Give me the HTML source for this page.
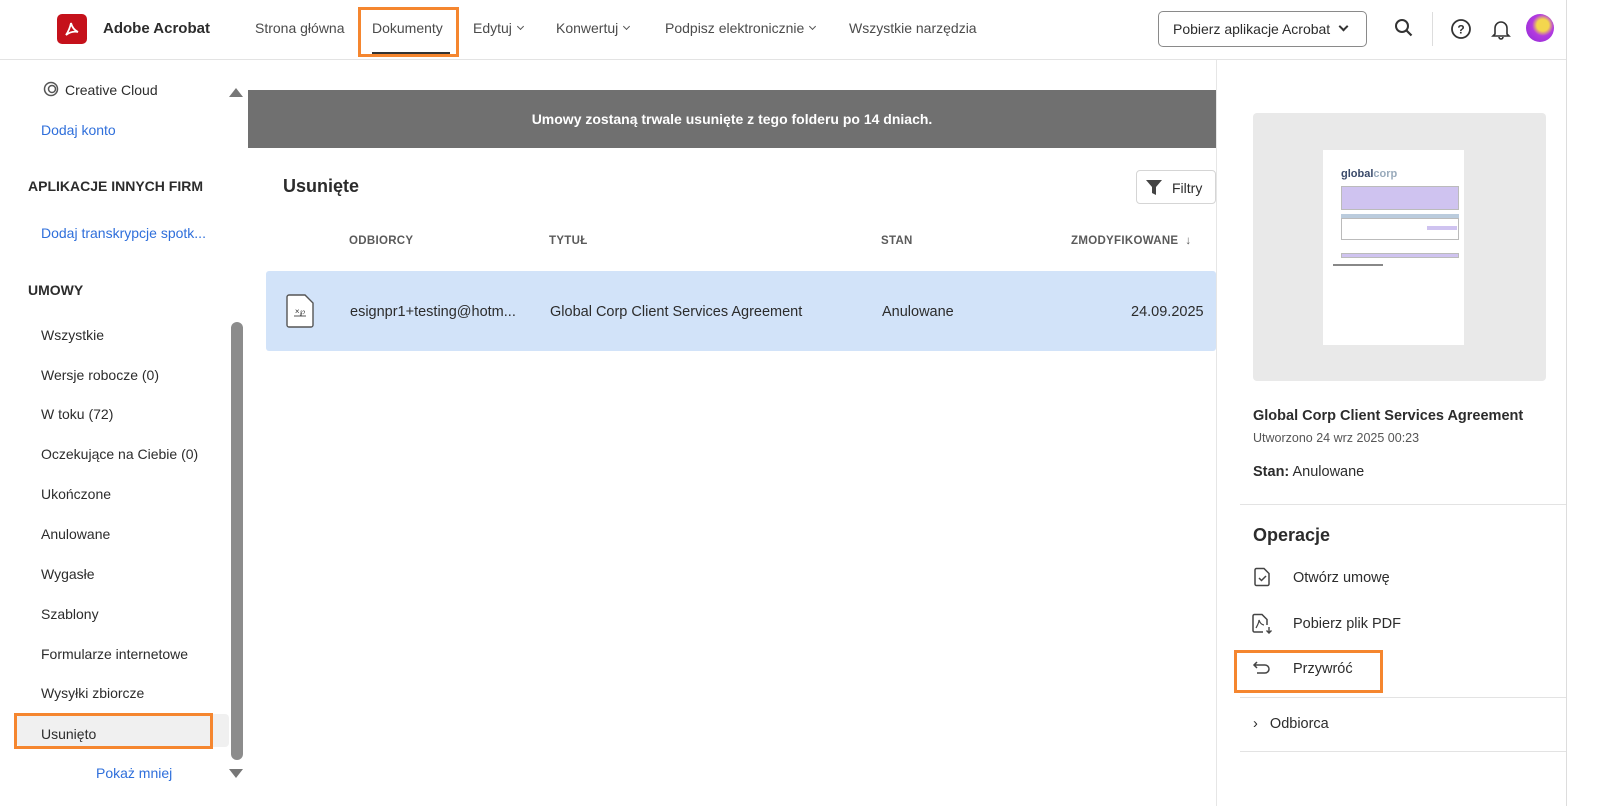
<!DOCTYPE html>
<html><head><meta charset="utf-8"><style>
*{margin:0;padding:0;box-sizing:border-box}
body{width:1599px;height:806px;position:relative;overflow:hidden;background:#fff;font-family:"Liberation Sans",sans-serif;color:#2c2c2c;font-size:14px}
.a{position:absolute;white-space:nowrap}
.nav{top:20px;font-size:14px;color:#4b4b4b}
.side{left:41px;font-size:14px;color:#2c2c2c}
.blue{color:#2f6fdb}
.ob{position:absolute;border:3px solid #f5862f}
.hd{top:235px;font-size:11.5px;font-weight:bold;color:#5a5a5a;letter-spacing:.3px}
.cv{display:inline-block;width:5px;height:5px;border-right:1.3px solid #555;border-bottom:1.3px solid #555;transform:rotate(45deg);margin:0 0 4px 6px}
</style></head><body>
<!-- header -->
<div class="a" style="left:57px;top:14px;width:30px;height:30px;background:#c5111b;border-radius:5px"></div>
<svg class="a" style="left:62px;top:19px" width="20" height="20" viewBox="0 0 20 20"><path d="M4 16c2-3 4-7 5-12 1 4 3 7 7 9-4-1-8 0-12 3z" fill="none" stroke="#fff" stroke-width="1.8"/></svg>
<div class="a" style="left:103px;top:20px;font-size:15px;font-weight:bold;color:#2c2c2c">Adobe Acrobat</div>
<div class="a nav" style="left:255px">Strona główna</div>
<div class="a nav" style="left:372px">Dokumenty</div>
<div class="a" style="left:372px;top:52px;width:78px;height:2px;background:#333"></div>
<div class="a nav" style="left:473px">Edytuj<span class="cv"></span></div>
<div class="a nav" style="left:556px">Konwertuj<span class="cv"></span></div>
<div class="a nav" style="left:665px">Podpisz elektronicznie<span class="cv"></span></div>
<div class="a nav" style="left:849px">Wszystkie narzędzia</div>
<div class="ob" style="left:358px;top:7px;width:101px;height:50px"></div>
<div class="a" style="left:1158px;top:11px;width:209px;height:36px;border:1px solid #8a8a8a;border-radius:5px;font-size:14px;padding:9px 0 0 14px;color:#2c2c2c">Pobierz aplikacje Acrobat<span class="cv" style="width:7px;height:7px;border-width:2px;border-color:#333;margin-left:10px"></span></div>
<svg class="a" style="left:1394px;top:18px" width="20" height="20" viewBox="0 0 20 20"><circle cx="8" cy="8" r="6" fill="none" stroke="#333" stroke-width="2"/><path d="M12.5 12.5l5 5" stroke="#333" stroke-width="2.2"/></svg>
<div class="a" style="left:1432px;top:12px;width:1px;height:34px;background:#ddd"></div>
<svg class="a" style="left:1450px;top:18px" width="22" height="22" viewBox="0 0 22 22"><circle cx="11" cy="11" r="9" fill="none" stroke="#333" stroke-width="1.8"/><text x="11" y="15.5" font-size="12" text-anchor="middle" fill="#333" font-family="Liberation Sans" font-weight="bold">?</text></svg>
<svg class="a" style="left:1491px;top:18px" width="20" height="22" viewBox="0 0 20 22"><path d="M4 16V10a6 6 0 0112 0v6l2 2H2z M8 19a2 2 0 004 0" fill="none" stroke="#333" stroke-width="1.6"/></svg>
<div class="a" style="left:1526px;top:14px;width:28px;height:28px;border-radius:50%;background:radial-gradient(circle at 60% 40%,#f3d64e 0 25%,#b33be0 45%,#8f2ad6)"></div>
<div class="a" style="left:0;top:59px;width:1567px;height:1px;background:#e3e3e3"></div>
<div class="a" style="left:1566px;top:0;width:1px;height:806px;background:#ddd"></div>

<!-- sidebar -->
<svg class="a" style="left:41px;top:81px" width="20" height="16" viewBox="0 0 20 16"><circle cx="10" cy="8" r="6.5" fill="none" stroke="#555" stroke-width="1.5"/><circle cx="11" cy="8" r="3.5" fill="none" stroke="#555" stroke-width="1.5"/></svg>
<div class="a side" style="left:65px;top:82px">Creative Cloud</div>
<div class="a side blue" style="top:122px">Dodaj konto</div>
<div class="a" style="left:28px;top:178px;font-size:14px;font-weight:bold;color:#2c2c2c">APLIKACJE INNYCH FIRM</div>
<div class="a side blue" style="top:225px">Dodaj transkrypcje spotk...</div>
<div class="a" style="left:28px;top:282px;font-size:14px;font-weight:bold;color:#2c2c2c">UMOWY</div>
<div class="a side" style="top:327px">Wszystkie</div>
<div class="a side" style="top:367px">Wersje robocze (0)</div>
<div class="a side" style="top:406px">W toku (72)</div>
<div class="a side" style="top:446px">Oczekujące na Ciebie (0)</div>
<div class="a side" style="top:486px">Ukończone</div>
<div class="a side" style="top:526px">Anulowane</div>
<div class="a side" style="top:566px">Wygasłe</div>
<div class="a side" style="top:606px">Szablony</div>
<div class="a side" style="top:646px">Formularze internetowe</div>
<div class="a side" style="top:685px">Wysyłki zbiorcze</div>
<div class="a" style="left:17px;top:714px;width:212px;height:33px;background:#f0f0f0;border-radius:4px"></div>
<div class="a side" style="top:726px">Usunięto</div>
<div class="ob" style="left:14px;top:713px;width:199px;height:36px"></div>
<div class="a side blue" style="left:96px;top:765px">Pokaż mniej</div>
<div class="a" style="left:229px;top:88px;width:0;height:0;border-left:7px solid transparent;border-right:7px solid transparent;border-bottom:9px solid #777"></div>
<div class="a" style="left:231px;top:322px;width:12px;height:438px;background:#8c8c8c;border-radius:6px"></div>
<div class="a" style="left:229px;top:769px;width:0;height:0;border-left:7px solid transparent;border-right:7px solid transparent;border-top:9px solid #777"></div>

<!-- main -->
<div class="a" style="left:248px;top:90px;width:968px;height:58px;background:#707070;color:#fff;font-weight:bold;font-size:14px;text-align:center;line-height:58px">Umowy zostaną trwale usunięte z tego folderu po 14 dniach.</div>
<div class="a" style="left:1216px;top:60px;width:1px;height:746px;background:#e6e6e6"></div>
<div class="a" style="left:283px;top:176px;font-size:18px;font-weight:bold;color:#2c2c2c">Usunięte</div>
<div class="a" style="left:1136px;top:170px;width:80px;height:34px;border:1px solid #d5d5d5;border-radius:4px;font-size:14px;padding:9px 0 0 35px">Filtry</div>
<svg class="a" style="left:1145px;top:179px" width="18" height="17" viewBox="0 0 18 17"><path d="M1 1h16l-6 7v8l-4-2V8z" fill="#444"/></svg>
<div class="a hd" style="left:349px">ODBIORCY</div>
<div class="a hd" style="left:549px">TYTUŁ</div>
<div class="a hd" style="left:881px">STAN</div>
<div class="a hd" style="left:1071px">ZMODYFIKOWANE&nbsp; ↓</div>
<div class="a" style="left:266px;top:271px;width:950px;height:80px;background:#d2e3f9;border-radius:3px"></div>
<svg class="a" style="left:285px;top:294px" width="30" height="34" viewBox="0 0 30 34"><path d="M2 3a2 2 0 012-2h16l8 8v22a2 2 0 01-2 2H4a2 2 0 01-2-2z" fill="#fff" stroke="#555" stroke-width="1.4"/><text x="15" y="20" font-size="8" text-anchor="middle" fill="#333" font-family="Liberation Sans">×℘</text><path d="M9 22h12" stroke="#555"/></svg>
<div class="a" style="left:350px;top:304px;font-size:14.5px">esignpr1+testing@hotm...</div>
<div class="a" style="left:550px;top:304px;font-size:14.5px">Global Corp Client Services Agreement</div>
<div class="a" style="left:882px;top:304px;font-size:14.5px">Anulowane</div>
<div class="a" style="left:1131px;top:304px;font-size:14.5px">24.09.2025</div>

<!-- right panel -->
<div class="a" style="left:1253px;top:113px;width:293px;height:268px;background:#e9e9e9;border-radius:4px"></div>
<div class="a" style="left:1323px;top:150px;width:141px;height:195px;background:#fff">
 <div class="a" style="left:18px;top:18px;font-size:11px;font-weight:bold;color:#3a4a6a">global<span style="color:#9ab">corp</span></div>
 <div class="a" style="left:18px;top:36px;width:118px;height:24px;background:#cfc3f0;border:1px solid #bbb"></div>
 <div class="a" style="left:18px;top:64px;width:118px;height:4px;background:#bcd"></div>
 <div class="a" style="left:18px;top:68px;width:118px;height:22px;border:1px solid #bbb"></div>
 <div class="a" style="left:104px;top:76px;width:30px;height:4px;background:#cfc3f0"></div>
 <div class="a" style="left:18px;top:103px;width:118px;height:5px;background:#cfc3f0;border:1px solid #bbb"></div>
 <div class="a" style="left:10px;top:114px;width:50px;height:2px;background:#888"></div>
</div>
<div class="a" style="left:1253px;top:408px;font-size:14.5px;font-weight:bold">Global Corp Client Services Agreement</div>
<div class="a" style="left:1253px;top:431px;font-size:12.5px;color:#555">Utworzono 24 wrz 2025 00:23</div>
<div class="a" style="left:1253px;top:464px;font-size:14.5px"><b>Stan:</b> Anulowane</div>
<div class="a" style="left:1240px;top:504px;width:326px;height:1px;background:#e3e3e3"></div>
<div class="a" style="left:1253px;top:525px;font-size:18px;font-weight:bold">Operacje</div>
<svg class="a" style="left:1253px;top:567px" width="18" height="20" viewBox="0 0 18 20"><path d="M2 3a1.5 1.5 0 011.5-1.5H11l5 5V17a1.5 1.5 0 01-1.5 1.5h-11A1.5 1.5 0 012 17z" fill="none" stroke="#444" stroke-width="1.5"/><path d="M6 11l2.5 2.5L13 9" fill="none" stroke="#444" stroke-width="1.5"/></svg>
<div class="a" style="left:1293px;top:570px;font-size:14.5px">Otwórz umowę</div>
<svg class="a" style="left:1251px;top:613px" width="22" height="22" viewBox="0 0 22 22"><path d="M12 19H3.5A1.5 1.5 0 012 17.5V3a1.5 1.5 0 011.5-1.5H11l5 5V12" fill="none" stroke="#444" stroke-width="1.5"/><path d="M5 15c1-2 3-5 3-8 1 3 3 5 5 5" fill="none" stroke="#444" stroke-width="1.2"/><path d="M18 14v6M15.5 17.5L18 20l2.5-2.5" fill="none" stroke="#444" stroke-width="1.4"/></svg>
<div class="a" style="left:1293px;top:616px;font-size:14.5px">Pobierz plik PDF</div>
<svg class="a" style="left:1252px;top:661px" width="20" height="14" viewBox="0 0 20 14"><path d="M2 4h11a4 4 0 010 8H5M5 1L2 4l3 3" fill="none" stroke="#444" stroke-width="1.5"/></svg>
<div class="a" style="left:1293px;top:661px;font-size:14.5px">Przywróć</div>
<div class="ob" style="left:1234px;top:650px;width:149px;height:43px"></div>
<div class="a" style="left:1240px;top:697px;width:326px;height:1px;background:#e3e3e3"></div>
<div class="a" style="left:1253px;top:716px;font-size:14.5px">›&nbsp;&nbsp; Odbiorca</div>
<div class="a" style="left:1240px;top:751px;width:326px;height:1px;background:#e3e3e3"></div>
</body></html>
